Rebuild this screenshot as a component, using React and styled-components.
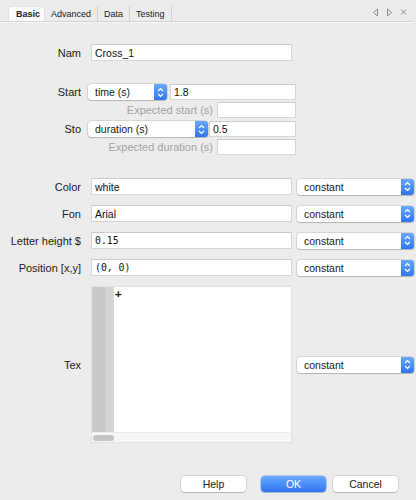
import React from 'react';
import styled, { createGlobalStyle } from 'styled-components';

const Global = createGlobalStyle`
  html, body { margin: 0; padding: 0; background: #ececec; }
  body { font-family: "Liberation Sans", Arial, sans-serif; color: #1e1e1e; }
  * { box-sizing: border-box; }
`;

const Window = styled.div`
  width: 416px;
  height: 500px;
  background: #ececec;
  display: flex;
  flex-direction: column;
  overflow: hidden;
`;

const TabBar = styled.div`
  height: 22px;
  display: flex;
  align-items: flex-end;
  margin: 0 3px 0 0;
  padding-left: 8px;
  border-bottom: 1px solid #d3d3d3;
  box-shadow: 0 1px 0 #f8f8f8;
`;

const Tab = styled.div`
  height: 15px;
  display: flex;
  align-items: center;
  padding: 0 ${p => (p.$active ? '4px 0 7px' : '6px')};
  font-size: 9px;
  font-weight: ${p => (p.$active ? 700 : 400)};
  color: #222;
  background: ${p => (p.$active ? '#fbfbfb' : 'transparent')};
  border-right: 1px solid ${p => (p.$active ? '#e0e0e0' : '#d2d2d2')};
  border-left: ${p => (p.$active ? '1px solid #e0e0e0' : 'none')};
  border-top: ${p => (p.$active ? '1px solid #e6e6e6' : 'none')};
  border-radius: ${p => (p.$active ? '3px 3px 0 0' : '0')};
  margin-bottom: 0;
`;

const TabTools = styled.div`
  margin-left: auto;
  height: 21px;
  display: flex;
  align-items: center;
  gap: 7px;
  padding-right: 6px;
  padding-top: 3px;
`;

const Body = styled.div`
  display: flex;
  flex-direction: column;
`;

const Row = styled.div`
  display: flex;
  align-items: center;
  height: ${p => p.$h || 17}px;
  margin-top: ${p => p.$mt}px;
`;

const Label = styled.div`
  width: 81px;
  flex-shrink: 0;
  text-align: right;
  font-size: 11px;
  margin-right: ${p => p.$gap}px;
  color: #1a1a1a;
`;

const SubLabel = styled.div`
  width: 213px;
  flex-shrink: 0;
  text-align: right;
  font-size: 11px;
  margin-right: 4px;
  color: #a2a2a2;
`;

const Field = styled.input`
  width: ${p => p.$w}px;
  height: ${p => p.$h || 17}px;
  margin-left: ${p => p.$ml || 0}px;
  border: 1px solid #d6d6d6;
  border-top-color: #cbcbcb;
  background: #fff;
  padding: 0 3px;
  font-family: ${p => (p.$mono ? '"DejaVu Sans Mono", monospace' : '"Liberation Sans", Arial, sans-serif')};
  font-size: ${p => (p.$mono ? '9.8px' : '10.5px')};
  color: #111;
  outline: none;
  border-radius: 0;
`;

const SelectBox = styled.div`
  width: ${p => p.$w}px;
  height: 16px;
  margin-left: ${p => p.$ml || 0}px;
  display: flex;
  align-items: stretch;
  background: #fff;
  border-radius: 3px;
  box-shadow: 0 0 0 0.5px rgba(0, 0, 0, 0.18), 0 1px 1px rgba(0, 0, 0, 0.16);
  flex-shrink: 0;
`;

const SelectText = styled.div`
  flex: 1;
  display: flex;
  align-items: center;
  padding-left: 7px;
  font-size: 10.5px;
  color: #1a1a1a;
`;

const Stepper = styled.div`
  width: 13px;
  border-radius: 0 3px 3px 0;
  background: linear-gradient(#69a8fb, #2f77f0);
  display: flex;
  align-items: center;
  justify-content: center;
`;

const TextArea = styled.div`
  width: 201px;
  height: 157px;
  display: flex;
  flex-direction: column;
  background: #fff;
  border: 1px solid #e2e2e2;
`;

const EditorMain = styled.div`
  flex: 1;
  display: flex;
`;

const Gutter = styled.div`
  width: ${p => p.$w}px;
  background: ${p => p.$c};
`;

const EditorText = styled.div`
  flex: 1;
  padding: 1px 0 0 1px;
  font-family: "DejaVu Sans Mono", monospace;
  font-size: 11px;
  font-weight: 700;
  line-height: 12px;
  color: #111;
`;

const HScroll = styled.div`
  height: 10px;
  background: #f7f7f7;
  border-top: 1px solid #ececec;
  display: flex;
  align-items: center;
  padding-left: 1px;
`;

const Thumb = styled.div`
  width: 21px;
  height: 6px;
  border-radius: 3px;
  background: #c3c3c3;
`;

const ButtonRow = styled.div`
  display: flex;
  justify-content: flex-end;
  align-items: center;
  margin-top: 32px;
  padding-right: 18px;
  height: 17px;
`;

const Button = styled.div`
  width: 65px;
  height: 16px;
  margin-left: ${p => p.$ml}px;
  display: flex;
  align-items: center;
  justify-content: center;
  font-size: 10.5px;
  border-radius: 4px;
  color: ${p => (p.$primary ? '#fff' : '#1a1a1a')};
  background: ${p => (p.$primary ? 'linear-gradient(#6aa9fb, #2f76f0)' : '#fff')};
  box-shadow: ${p =>
    p.$primary
      ? '0 0 0 0.5px rgba(30, 90, 220, 0.5), 0 1px 1px rgba(0,0,0,0.12)'
      : '0 0 0 0.5px rgba(0, 0, 0, 0.18), 0 1px 1px rgba(0, 0, 0, 0.16)'};
`;

const Chevrons = () => (
  <svg width="7" height="11" viewBox="0 0 7 11">
    <path d="M1 4 L3.5 1.5 L6 4" fill="none" stroke="#fff" strokeWidth="1.2" />
    <path d="M1 7 L3.5 9.5 L6 7" fill="none" stroke="#fff" strokeWidth="1.2" />
  </svg>
);

const Select = ({ w, ml, children }) => (
  <SelectBox $w={w} $ml={ml}>
    <SelectText>{children}</SelectText>
    <Stepper>
      <Chevrons />
    </Stepper>
  </SelectBox>
);

const ToolIcon = ({ d }) => (
  <svg width="7" height="9" viewBox="0 0 7 9">
    <path d={d} fill="none" stroke="#8c8c8c" strokeWidth="1" />
  </svg>
);

export default function App() {
  return (
    <>
      <Global />
      <Window>
        <TabBar>
          <Tab $active>Basic</Tab>
          <Tab>Advanced</Tab>
          <Tab>Data</Tab>
          <Tab>Testing</Tab>
          <TabTools>
            <ToolIcon d="M5.5 1 L1.5 4.5 L5.5 8 Z" />
            <ToolIcon d="M1.5 1 L5.5 4.5 L1.5 8 Z" />
            <ToolIcon d="M1 1.5 L6 6.5 M6 1.5 L1 6.5" />
          </TabTools>
        </TabBar>
        <Body>
          <Row $mt={22}>
            <Label $gap={10}>Nam</Label>
            <Field $w={201} readOnly defaultValue="Cross_1" />
          </Row>

          <Row $mt={23} $h={16}>
            <Label $gap={7}>Start</Label>
            <Select w={79}>time (s)</Select>
            <Field $w={126} $h={16} $ml={3} readOnly defaultValue="1.8" />
          </Row>
          <Row $mt={2} $h={16}>
            <SubLabel>Expected start (s)</SubLabel>
            <Field $w={79} $h={16} readOnly defaultValue="" />
          </Row>
          <Row $mt={3} $h={16}>
            <Label $gap={7}>Sto</Label>
            <Select w={120}>duration (s)</Select>
            <Field $w={87} $h={16} $ml={1} readOnly defaultValue="0.5" />
          </Row>
          <Row $mt={2} $h={16}>
            <SubLabel>Expected duration (s)</SubLabel>
            <Field $w={79} $h={16} readOnly defaultValue="" />
          </Row>

          <Row $mt={23}>
            <Label $gap={10}>Color</Label>
            <Field $w={201} readOnly defaultValue="white" />
            <Select w={117} ml={5}>constant</Select>
          </Row>
          <Row $mt={10}>
            <Label $gap={10}>Fon</Label>
            <Field $w={201} readOnly defaultValue="Arial" />
            <Select w={117} ml={5}>constant</Select>
          </Row>
          <Row $mt={10}>
            <Label $gap={10}>Letter height $</Label>
            <Field $w={201} $mono readOnly defaultValue="0.15" />
            <Select w={117} ml={5}>constant</Select>
          </Row>
          <Row $mt={10}>
            <Label $gap={10}>Position [x,y]</Label>
            <Field $w={201} $mono readOnly defaultValue="(0, 0)" />
            <Select w={117} ml={5}>constant</Select>
          </Row>

          <Row $mt={10} $h={157}>
            <Label $gap={10}>Tex</Label>
            <TextArea>
              <EditorMain>
                <Gutter $w={13} $c="#c9c9c9" />
                <Gutter $w={9} $c="#d5d5d5" />
                <EditorText>+</EditorText>
              </EditorMain>
              <HScroll>
                <Thumb />
              </HScroll>
            </TextArea>
            <Select w={117} ml={5}>constant</Select>
          </Row>

          <ButtonRow>
            <Button $ml={0}>Help</Button>
            <Button $ml={15} $primary>OK</Button>
            <Button $ml={7}>Cancel</Button>
          </ButtonRow>
        </Body>
      </Window>
    </>
  );
}
